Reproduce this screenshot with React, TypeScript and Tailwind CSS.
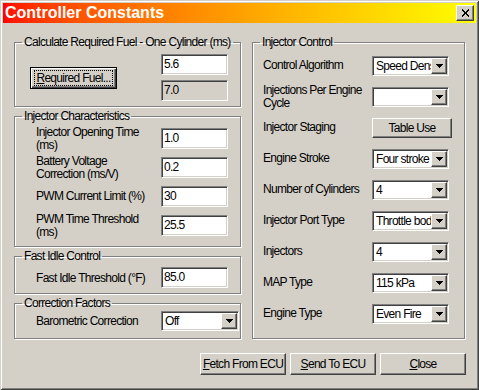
import React from 'react';

const sunken =
  'border border-t-[#808080] border-l-[#808080] border-b-white border-r-white shadow-[inset_1px_1px_0_#404040,inset_-1px_-1px_0_#d4d0c8]';
const raised =
  'border border-t-white border-l-white border-b-[#404040] border-r-[#404040] shadow-[inset_-1px_-1px_0_#808080,inset_1px_1px_0_#d4d0c8]';
const group =
  'min-w-0 border border-[#808080] shadow-[1px_1px_0_#fff,inset_1px_1px_0_#fff]';

function Legend({ children }: { children: React.ReactNode }) {
  return <legend className="ml-[7px] whitespace-nowrap px-[2px] leading-[14px]">{children}</legend>;
}

function Field({ value, disabled }: { value: string; disabled?: boolean }) {
  return (
    <div
      className={`h-[21px] w-[67px] ${disabled ? 'bg-[#d4d0c8]' : 'bg-white'} ${sunken} pl-[2px] leading-[19px]`}
    >
      {value}
    </div>
  );
}

function Select({ value, w = 'w-[77px]' }: { value: string; w?: string }) {
  return (
    <div className={`flex h-[20px] ${w} bg-white ${sunken} p-[1px]`}>
      <span className="flex-1 overflow-hidden whitespace-nowrap pl-[2px] leading-[16px]">{value}</span>
      <span className={`flex h-[16px] w-[16px] shrink-0 items-center justify-center bg-[#d4d0c8] ${raised}`}>
        <svg width="7" height="4" viewBox="0 0 7 4" shapeRendering="crispEdges">
          <path d="M0 0h7v1h-1v1h-1v1h-1v1h-1v-1h-1v-1h-1v-1h-1z" fill="#000" />
        </svg>
      </span>
    </div>
  );
}

function Btn({ children, w = 'w-[86px]' }: { children: React.ReactNode; w?: string }) {
  return (
    <div className={`flex h-[22px] ${w} items-center justify-center whitespace-nowrap bg-[#d4d0c8] ${raised}`}>
      {children}
    </div>
  );
}

const injRows: { label: React.ReactNode; value: string }[] = [
  { label: <>Injector Opening Time<br />(ms)</>, value: '1.0' },
  { label: <>Battery Voltage<br />Correction (ms/V)</>, value: '0.2' },
  { label: 'PWM Current Limit (%)', value: '30' },
  { label: <>PWM Time Threshold<br />(ms)</>, value: '25.5' },
];

const ctrlRows: { label: React.ReactNode; value?: string; button?: string }[] = [
  { label: 'Control Algorithm', value: 'Speed Density' },
  { label: <>Injections Per Engine<br />Cycle</>, value: '' },
  { label: 'Injector Staging', button: 'Table Use' },
  { label: 'Engine Stroke', value: 'Four stroke' },
  { label: 'Number of Cylinders', value: '4' },
  { label: 'Injector Port Type', value: 'Throttle body' },
  { label: 'Injectors', value: '4' },
  { label: 'MAP Type', value: '115 kPa' },
  { label: 'Engine Type', value: 'Even Fire' },
];

export default function App() {
  return (
    <div className="h-[390px] w-[479px] bg-[#d4d0c8] p-[3px] font-['Liberation_Sans',Arial,sans-serif] text-[12px] tracking-[-0.7px] text-black shadow-[inset_1px_1px_0_#d4d0c8,inset_-1px_-1px_0_#404040,inset_2px_2px_0_#fff,inset_-2px_-2px_0_#808080]">
      {/* title bar */}
      <div className="flex h-[20px] items-center justify-between bg-linear-to-r from-[#ff0000] to-[#ffff00] pl-[2px] pr-[2px]">
        <span className="text-[16px] font-bold leading-[20px] tracking-normal text-white">Controller Constants</span>
        <div className={`flex h-[16px] w-[18px] items-center justify-center bg-[#d4d0c8] ${raised}`}>
          <svg width="9" height="8" viewBox="0 0 9 8" shapeRendering="crispEdges">
            <path d="M1 0.5L8 7.5M8 0.5L1 7.5" stroke="#000" strokeWidth="2" />
          </svg>
        </div>
      </div>

      <div className="flex gap-[11px] pl-[11px] pt-[12px]">
        {/* left column */}
        <div className="flex w-[227px] flex-col gap-[2px]">
          <fieldset className={`${group} h-[72px]`}>
            <Legend>Calculate Required Fuel - One Cylinder (ms)</Legend>
            <div className="flex items-center pl-[15px] pt-[5px]">
              <div className="w-[131px]">
                <div className="flex h-[22px] w-[87px] whitespace-nowrap border border-black bg-[#d4d0c8] px-[3px] py-[2px] shadow-[inset_1px_1px_0_#fff,inset_-1px_-1px_0_#404040,inset_-2px_-2px_0_#808080]">
                  <div className="flex h-full w-full items-center justify-center border border-dotted border-black">
                    <span><u>R</u>equired Fuel...</span>
                  </div>
                </div>
              </div>
              <div className="flex flex-col gap-[5px]">
                <Field value="5.6" />
                <Field value="7.0" disabled />
              </div>
            </div>
          </fieldset>

          <fieldset className={`${group} h-[138px]`}>
            <Legend>Injector Characteristics</Legend>
            <div className="pl-[21px] pt-[1px]">
              {injRows.map((r, i) => (
                <div key={i} className="flex h-[29px] items-center">
                  <div className="w-[125px] leading-[13px]">{r.label}</div>
                  <Field value={r.value} />
                </div>
              ))}
            </div>
          </fieldset>

          <fieldset className={`${group} h-[45px]`}>
            <Legend>Fast Idle Control</Legend>
            <div className="flex items-center pl-[21px] pt-[4px]">
              <div className="w-[125px]">Fast Idle Threshold (°F)</div>
              <Field value="85.0" />
            </div>
          </fieldset>

          <fieldset className={`${group} h-[43px]`}>
            <Legend>Correction Factors</Legend>
            <div className="flex items-center pl-[21px] pt-[1px]">
              <div className="w-[125px]">Barometric Correction</div>
              <Select value="Off" w="w-[78px]" />
            </div>
          </fieldset>
        </div>

        {/* right column */}
        <fieldset className={`${group} h-[304px] w-[213px]`}>
          <Legend>Injector Control</Legend>
          <div className="pl-[10px] pt-[1px]">
            {ctrlRows.map((r, i) => (
              <div key={i} className="flex h-[31px] items-center">
                <div className="w-[109px] leading-[13px]">{r.label}</div>
                {r.button ? (
                  <div className={`flex h-[20px] w-[80px] items-center justify-center bg-[#d4d0c8] ${raised}`}>
                    {r.button}
                  </div>
                ) : (
                  <Select value={r.value ?? ''} />
                )}
              </div>
            ))}
          </div>
        </fieldset>
      </div>

      <div className="mt-[14px] flex justify-end gap-[4px] pr-[10px]">
        <Btn><span><u>F</u>etch From ECU</span></Btn>
        <Btn><span><u>S</u>end To ECU</span></Btn>
        <Btn><span><u>C</u>lose</span></Btn>
      </div>
    </div>
  );
}
